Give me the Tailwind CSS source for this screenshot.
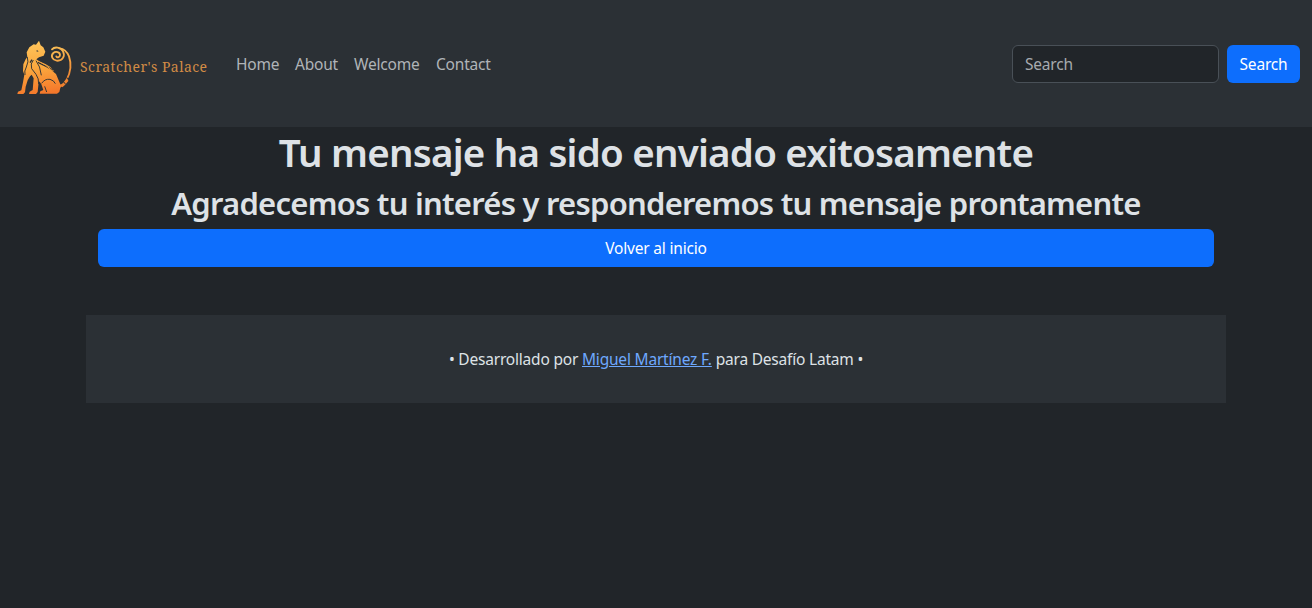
<!DOCTYPE html>
<html lang="es">
<head>
<meta charset="utf-8">
<title>Scratcher's Palace</title>
<script src="https://cdn.jsdelivr.net/npm/@tailwindcss/browser@4"></script>
</head>
<body class="min-h-screen bg-[#212529] font-['Noto_Sans','Open_Sans',sans-serif] text-[15.5px] leading-6 tracking-[-0.2px] text-[#dee2e6]">
<nav class="flex h-[127px] items-center bg-[#2b3035] pl-[10px] pr-3">
  <a href="#" class="flex items-center">
    <svg class="mt-[7px] h-[66px] w-[70px] shrink-0" viewBox="0 0 210 198" fill="none">
      <defs>
        <linearGradient id="fur" gradientUnits="userSpaceOnUse" x1="70" y1="20" x2="95" y2="182"><stop stop-color="#ffc65c"/><stop offset=".5" stop-color="#fba83e"/><stop offset="1" stop-color="#f4762a"/></linearGradient>
        <linearGradient id="tail" gradientUnits="userSpaceOnUse" x1="130" y1="40" x2="180" y2="160"><stop stop-color="#f9bd55"/><stop offset="1" stop-color="#ee7829"/></linearGradient>
      </defs>
      <path fill="url(#fur)" d="M87 20L92 34L100 40L106 53L101 65L87 70L79 76L87 82L106 90L120 98L132 110L127 111L138 120L144 134L151 151L157 155L151 161L148 174L141 179H89L91 172L100 168L94 151L88 142L85 154L83 174L78 180H57L59 173L68 168L71 133L65 122L60 127L53 139L47 158L45 175L40 180H22L24 173L34 169L39 145L43 122L39 111L40 91L47 76L52 69L50 55L58 40L71 31L78 32Z"/>
      <path stroke="#2b3035" stroke-width="2.8" d="M52 69Q57 83 49 99Q42 111 45 123M70 78Q60 89 65 104L78 121Q87 133 86 151M78 80Q91 96 94 124M95 148Q104 134 120 136Q132 139 136 149M104 157L110 174"/>
      <path stroke="#2b3035" stroke-width="4" d="M84 85Q108 96 130 109M66 77L60 86"/>
      <path stroke="#f5a13c" stroke-width="3" d="M82 80Q107 90 130 113"/>
      <path fill="#2b3035" d="M80 48L86 52L80 53Z"/>
      <path stroke="url(#tail)" stroke-linecap="round" stroke-width="5.5" d="M139 67C142 73 150 69 150 63C150 54 137 51 130 57C121 65 127 78 140 80C158 82 166 65 159 52C152 39 134 37 126 46"/>
      <path stroke="url(#tail)" stroke-linecap="round" stroke-width="5.5" d="M149 43C161 44 171 53 177 67C186 93 179 120 170 137C165 146 160 151 153 155"/>
      <path stroke="url(#tail)" stroke-width="7" d="M173 138L163 150L155 157"/>
      <path stroke="#2b3035" stroke-width="3" d="M169 131L180 137M158 140L167 151"/>
    </svg>
    <span class="mt-[6px] w-[156px] whitespace-nowrap font-['Noto_Serif','DejaVu_Serif',serif] text-[14px] tracking-[0.45px] text-[#d18b45]">Scratcher's Palace</span>
  </a>
  <div class="flex gap-4 whitespace-nowrap text-[#b0b4b8]">
    <a href="#" class="w-[43px]">Home</a><a href="#" class="w-[43px]">About</a><a href="#" class="w-[66px]">Welcome</a><a href="#" class="w-[56px]">Contact</a>
  </div>
  <form class="ml-auto flex gap-2">
    <input type="search" placeholder="Search" class="h-[38px] w-[207px] rounded-md border border-[#495057] bg-[#212529] px-3 tracking-[-0.2px] placeholder:text-[#a6aaae]">
    <button type="button" class="h-[38px] w-[73px] rounded-md bg-[#0d6efd] tracking-[-0.2px] text-white">Search</button>
  </form>
</nav>
<main class="mx-auto w-[1140px] px-3 text-center">
  <h1 class="mb-2 whitespace-nowrap pt-[2px] text-[38.5px] leading-[46px] font-semibold tracking-[-0.79px]">Tu mensaje ha sido enviado exitosamente</h1>
  <h2 class="mb-2 whitespace-nowrap pt-[2px] text-[31px] leading-[36px] font-semibold tracking-[-0.76px]">Agradecemos tu interés y responderemos tu mensaje prontamente</h2>
  <a href="#" class="flex h-[38px] items-center justify-center rounded-md bg-[#0d6efd] text-white">Volver al inicio</a>
</main>
<footer class="mx-auto mt-12 flex h-[88px] w-[1140px] items-center justify-center bg-[#2b3035]">
  <p class="whitespace-nowrap">• Desarrollado por <a href="#" class="text-[#6ea8fe] underline">Miguel Martínez F.</a> para Desafío Latam •</p>
</footer>
</body>
</html>
